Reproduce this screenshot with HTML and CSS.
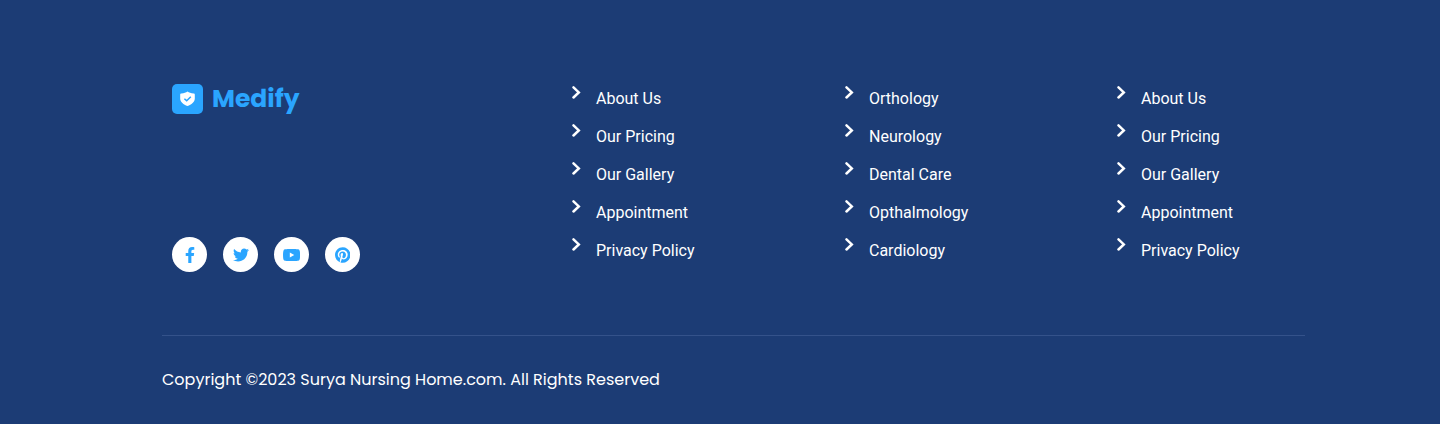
FILE: index.html
```html
<!DOCTYPE html>
<html lang="en">
<head>
<meta charset="utf-8">
<meta name="viewport" content="width=device-width, initial-scale=1">
<title>Medify</title>
<link rel="stylesheet" href="styles.css">
</head>
<body>
<svg class="sprite" aria-hidden="true">
  <symbol id="chevron" viewBox="0 0 10 14"><path d="M2.500 2.300l5.300 5.100L2.500 12.500" fill="none" stroke="currentColor" stroke-width="2.500" stroke-linecap="round"/></symbol>
</svg>
<footer class="footer">
  <div class="footer-main">
    <div class="brand">
      <a class="logo" href="#">
        <span class="logo-mark">
          <svg viewBox="0 0 16 16" width="16" height="16" aria-hidden="true"><path class="shield" d="M7.500.6c1.500 1.200 3.500 1.800 6.100 1.800.8 0 1.200.4 1.200 1.100V7.500c0 3.700-3.300 5.900-7.300 7.600C3.500 13.400.2 11.200.2 7.500V3.500c0-.7.4-1.100 1.200-1.100 2.600 0 4.600-.6 6.100-1.800z"/><path class="tick" d="M4.400 7.700l2.300 2.100L10.800 5.800"/></svg>
        </span>
        <span class="logo-name">Medify</span>
      </a>
      <div class="social">
        <a href="#" aria-label="Facebook"><svg viewBox="0 0 320 512" height="16"><path d="M279.140 288l14.220-92.660h-88.910v-60.130c0-25.350 12.420-50.060 52.240-50.060h40.420V6.260S260.430 0 225.360 0c-73.220 0-121.080 44.380-121.080 124.720v70.620H22.890V288h81.390v224h100.170V288z"/></svg></a>
        <a href="#" aria-label="Twitter"><svg viewBox="0 0 512 512" height="16"><path d="M459.370 151.716c.325 4.548.325 9.097.325 13.645 0 138.720-105.583 298.558-298.558 298.558-59.452 0-114.680-17.219-161.137-47.106 8.447.974 16.568 1.299 25.340 1.299 49.055 0 94.213-16.568 130.274-44.832-46.132-.975-84.792-31.188-98.112-72.772 6.498.974 12.995 1.624 19.818 1.624 9.421 0 18.843-1.300 27.614-3.573-48.081-9.747-84.143-51.980-84.143-102.985v-1.299c13.969 7.797 30.214 12.670 47.431 13.319-28.264-18.843-46.781-51.005-46.781-87.391 0-19.492 5.197-37.360 14.294-52.954 51.655 63.675 129.300 105.258 216.365 109.807-1.624-7.797-2.599-15.918-2.599-24.040 0-57.828 46.782-104.934 104.934-104.934 30.213 0 57.502 12.670 76.670 33.137 23.715-4.548 46.456-13.320 66.599-25.340-7.798 24.366-24.366 44.833-46.132 57.827 21.117-2.273 41.584-8.122 60.426-16.243-14.292 20.791-32.161 39.308-52.628 54.253z"/></svg></a>
        <a href="#" aria-label="YouTube"><svg viewBox="14 64 548 384" height="12"><path d="M549.655 124.083c-6.281-23.650-24.787-42.276-48.284-48.597C458.781 64 288 64 288 64S117.220 64 74.629 75.486c-23.497 6.322-42.003 24.947-48.284 48.597-11.412 42.867-11.412 132.305-11.412 132.305s0 89.438 11.412 132.305c6.281 23.650 24.787 41.500 48.284 47.821C117.220 448 288 448 288 448s170.780 0 213.371-11.486c23.497-6.321 42.003-24.171 48.284-47.821 11.412-42.867 11.412-132.305 11.412-132.305s0-89.438-11.412-132.305zm-317.510 213.508V175.185l142.739 81.205-142.739 81.201z"/></svg></a>
        <a href="#" aria-label="Pinterest"><svg viewBox="0 0 496 512" height="16"><path d="M496 256c0 137-111 248-248 248-25.600 0-50.200-3.900-73.400-11.100 10.100-16.500 25.200-43.500 30.800-65 3-11.600 15.400-59 15.400-59 8.100 15.400 31.700 28.500 56.800 28.500 74.800 0 128.700-68.800 128.700-154.300 0-81.900-66.900-143.200-152.900-143.200-107 0-163.900 71.800-163.900 150.100 0 36.400 19.400 81.700 50.300 96.100 4.700 2.200 7.200 1.200 8.300-3.300.8-3.400 5-20.300 6.900-28.100.6-2.500.3-4.700-1.700-7.100-10.100-12.500-18.300-35.300-18.300-56.600 0-54.700 41.400-107.600 112-107.600 60.900 0 103.600 41.500 103.600 100.900 0 67.100-33.900 113.600-78 113.600-24.300 0-42.600-20.100-36.700-44.800 7-29.500 20.500-61.300 20.500-82.600 0-19-10.200-34.900-31.400-34.900-24.900 0-44.900 25.700-44.900 60.200 0 22 7.400 36.800 7.400 36.800s-24.500 103.800-29 123.200c-5 21.400-3 51.600-.9 71.200C65.400 450.900 0 361.100 0 256 0 119 111 8 248 8s248 111 248 248z"/></svg></a>
      </div>
    </div>
    <ul class="links">
      <li><svg class="chevron"><use href="#chevron"/></svg><a href="#">About Us</a></li>
      <li><svg class="chevron"><use href="#chevron"/></svg><a href="#">Our Pricing</a></li>
      <li><svg class="chevron"><use href="#chevron"/></svg><a href="#">Our Gallery</a></li>
      <li><svg class="chevron"><use href="#chevron"/></svg><a href="#">Appointment</a></li>
      <li><svg class="chevron"><use href="#chevron"/></svg><a href="#">Privacy Policy</a></li>
    </ul>
    <ul class="links">
      <li><svg class="chevron"><use href="#chevron"/></svg><a href="#">Orthology</a></li>
      <li><svg class="chevron"><use href="#chevron"/></svg><a href="#">Neurology</a></li>
      <li><svg class="chevron"><use href="#chevron"/></svg><a href="#">Dental Care</a></li>
      <li><svg class="chevron"><use href="#chevron"/></svg><a href="#">Opthalmology</a></li>
      <li><svg class="chevron"><use href="#chevron"/></svg><a href="#">Cardiology</a></li>
    </ul>
    <ul class="links">
      <li><svg class="chevron"><use href="#chevron"/></svg><a href="#">About Us</a></li>
      <li><svg class="chevron"><use href="#chevron"/></svg><a href="#">Our Pricing</a></li>
      <li><svg class="chevron"><use href="#chevron"/></svg><a href="#">Our Gallery</a></li>
      <li><svg class="chevron"><use href="#chevron"/></svg><a href="#">Appointment</a></li>
      <li><svg class="chevron"><use href="#chevron"/></svg><a href="#">Privacy Policy</a></li>
    </ul>
  </div>
  <p class="copyright">Copyright ©2023 Surya Nursing Home.com. All Rights Reserved</p>
</footer>
</body>
</html>
```

FILE: styles.css
```css
* { box-sizing: border-box; }

body {
  margin: 0;
  background: #1c3c75;
  color: #fff;
  font-family: Roboto, "Liberation Sans", sans-serif;
  font-size: 16px;
}

a { color: inherit; text-decoration: none; }

.sprite { display: none; }

.footer {
  padding: 84px 135px 32px 162px;
  border-bottom: 2px solid #1b366c;
}

.footer-main {
  display: grid;
  grid-template-columns: 409fr 273fr 272fr 189fr;
  padding-bottom: 63px;
  border-bottom: 1px solid #34528a;
}

.brand {
  display: flex;
  flex-direction: column;
  justify-content: space-between;
  align-items: flex-start;
  padding-left: 10px;
}

.logo {
  display: flex;
  align-items: flex-start;
  gap: 9px;
  color: #2aa5ff;
}

.logo-mark {
  display: flex;
  align-items: center;
  justify-content: center;
  width: 31px;
  height: 30px;
  border-radius: 5px;
  background: #2aa5ff;
}

.shield { fill: #fff; }

.tick {
  fill: none;
  stroke: #2aa5ff;
  stroke-width: 1.5;
}

.logo-name {
  font-family: Poppins, Inter, "Open Sans", sans-serif;
  font-size: 25px;
  font-weight: 700;
  line-height: 30px;
}

.social { display: flex; gap: 16px; }

.social a {
  display: flex;
  align-items: center;
  justify-content: center;
  width: 35px;
  height: 35px;
  border-radius: 50%;
  background: #fff;
}

.social svg { fill: #2aa5ff; }

.links {
  display: flex;
  flex-direction: column;
  gap: 8px;
  margin: 0;
  padding: 0 0 6px;
  list-style: none;
}

.links li {
  display: flex;
  align-items: flex-start;
  gap: 15px;
  line-height: 30px;
}

.chevron {
  flex: none;
  width: 10px;
  height: 14px;
  margin-top: 1px;
}

.copyright {
  margin: 0;
  padding-top: 32px;
  font-family: Poppins, Inter, "Open Sans", sans-serif;
  font-size: 16px;
  line-height: 24px;
}
```
